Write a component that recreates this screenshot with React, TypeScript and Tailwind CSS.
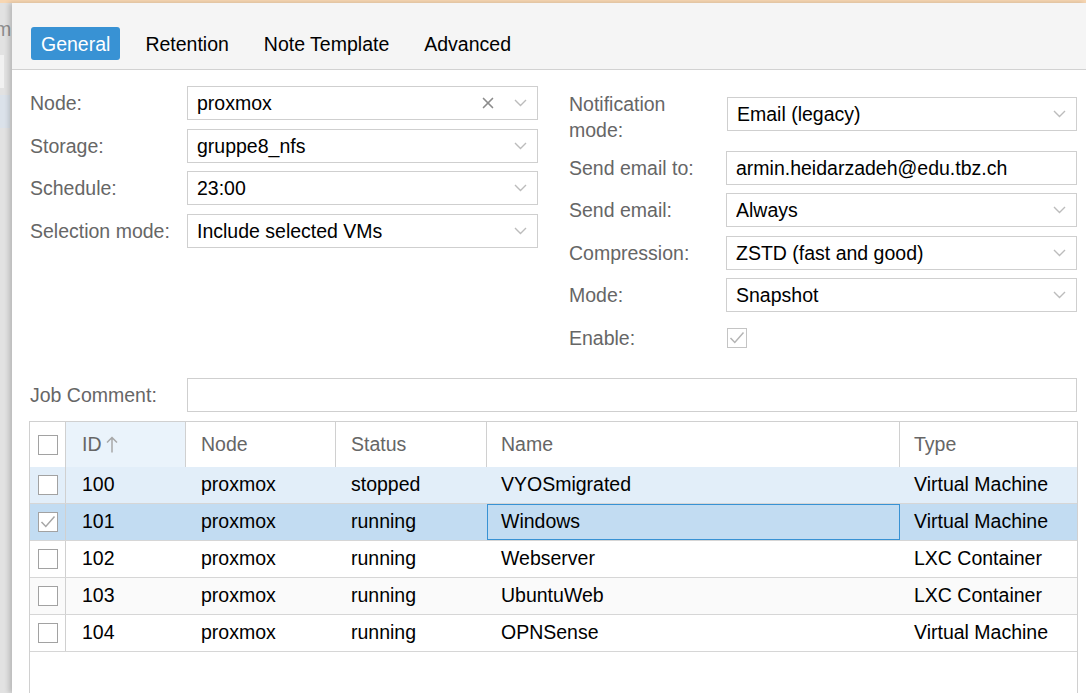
import { X } from 'lucide-react'

function Chevron() {
  return (
    <svg width="13" height="8" viewBox="0 0 13 8" className="shrink-0">
      <path d="M1 1l5.5 5.5L12 1" fill="none" stroke="#bcbcbc" strokeWidth="1.4" />
    </svg>
  )
}

function Field({ value = '', combo = true, clear = false }: { value?: string; combo?: boolean; clear?: boolean }) {
  return (
    <div className="h-[34px] flex items-center border border-[#cfcfcf] bg-white pl-[9px] pr-[10px]">
      <span className="flex-1 truncate text-black pt-[2px]">{value}</span>
      {clear && <X className="w-[18px] h-[18px] text-[#8c8c8c] mr-[17px]" strokeWidth={2.2} />}
      {combo && <Chevron />}
    </div>
  )
}

function Row({ label, children }: { label: string; children: React.ReactNode }) {
  return (
    <div className="flex items-center">
      <div className="w-[157px] shrink-0 text-[#666] pt-[2px]">{label}</div>
      <div className="flex-1">{children}</div>
    </div>
  )
}

function Check({ checked = false, light = false }: { checked?: boolean; light?: boolean }) {
  return (
    <div
      className={`w-[20px] h-[20px] border-[1.5px] bg-white flex items-center justify-center ${
        light ? 'border-[#c4c4c4]' : 'border-[#a2a2a2]'
      }`}
    >
      {checked && (
        <svg width="16" height="14" viewBox="0 0 16 14">
          <path d="M1.5 7l4.3 4.5L14.5 1.5" fill="none" stroke={light ? '#b4b4b4' : '#a6a6a6'} strokeWidth="1.5" />
        </svg>
      )}
    </div>
  )
}

function SortArrow() {
  return (
    <svg width="12" height="17" viewBox="0 0 12 17" className="ml-[4px]">
      <path d="M6 1.5V16.5M1 6.5L6 1.5L11 6.5" fill="none" stroke="#a8a8a8" strokeWidth="1.5" />
    </svg>
  )
}

const guests = [
  { id: 100, status: 'stopped', name: 'VYOSmigrated', type: 'Virtual Machine', bg: 'bg-[#e2eef9]' },
  { id: 101, status: 'running', name: 'Windows', type: 'Virtual Machine', bg: 'bg-[#c2dcf2]', selected: true },
  { id: 102, status: 'running', name: 'Webserver', type: 'LXC Container', bg: 'bg-white' },
  { id: 103, status: 'running', name: 'UbuntuWeb', type: 'LXC Container', bg: 'bg-[#fafafa]' },
  { id: 104, status: 'running', name: 'OPNSense', type: 'Virtual Machine', bg: 'bg-white' },
]

export default function App() {
  return (
    <div className="w-[1086px] h-[693px] overflow-hidden flex flex-col bg-[#e4e4e4] text-[19.5px] font-['Liberation_Sans',Arial,sans-serif]">
      <div className="h-[3px] shrink-0 bg-[#f7d6b2]" />
      <div className="flex flex-1 min-h-0">
        {/* page behind the dialog */}
        <div className="w-[12px] shrink-0 bg-[#e2e2e2] overflow-hidden flex flex-col">
          <div className="h-[52px] pt-[14px] text-[#8e8e8e] leading-[24px] -ml-[5px]">m</div>
          <div className="h-[33px] w-[4px] bg-[#f1f1f1]" />
          <div className="h-[7px]" />
          <div className="h-[33px] w-[10px] bg-[#dbe2ea]" />
        </div>

        <div className="flex-1 flex flex-col bg-white shadow-[-3px_0_5px_rgba(0,0,0,0.18)]">
          <div className="shrink-0 bg-[#f5f5f5] border-b border-[#d2d2d2] pt-[24px] pb-[9px] pl-[19px] flex items-center">
            <div className="h-[33px] px-[10px] pt-[2px] flex items-center rounded-[3px] bg-[#3892d4] text-white">General</div>
            <div className="h-[33px] px-[10px] pt-[2px] ml-[15px] flex items-center text-black">Retention</div>
            <div className="h-[33px] px-[10px] pt-[2px] ml-[15px] flex items-center text-black">Note Template</div>
            <div className="h-[33px] px-[10px] pt-[2px] ml-[15px] flex items-center text-black">Advanced</div>
          </div>

          <div className="flex-1 flex flex-col pt-[16px] pl-[18px] pr-[9px] min-h-0">
            <div className="grid grid-cols-2 gap-x-[31px]">
              <div className="flex flex-col gap-[8.5px]">
                <Row label="Node:"><Field value="proxmox" clear /></Row>
                <Row label="Storage:"><Field value="gruppe8_nfs" /></Row>
                <Row label="Schedule:"><Field value="23:00" /></Row>
                <Row label="Selection mode:"><Field value="Include selected VMs" /></Row>
              </div>
              <div className="flex flex-col gap-[8.5px]">
                <div className="flex items-center h-[56px]">
                  <div className="w-[158px] shrink-0 text-[#666] leading-[26px] pt-[5px]">
                    Notification
                    <br />
                    mode:
                  </div>
                  <div className="flex-1">
                    <Field value="Email (legacy)" />
                  </div>
                </div>
                <Row label="Send email to:"><Field value="armin.heidarzadeh@edu.tbz.ch" combo={false} /></Row>
                <Row label="Send email:"><Field value="Always" /></Row>
                <Row label="Compression:"><Field value="ZSTD (fast and good)" /></Row>
                <Row label="Mode:"><Field value="Snapshot" /></Row>
                <div className="flex items-center h-[34px]">
                  <div className="w-[158px] shrink-0 text-[#666] pt-[2px]">Enable:</div>
                  <Check checked light />
                </div>
              </div>
            </div>

            <div className="mt-[23.5px]">
              <Row label="Job Comment:"><Field combo={false} /></Row>
            </div>

            <div className="mt-[9px] -ml-px -mr-px flex-1 border-t border-x border-[#d0d0d0] bg-white flex flex-col">
              <div className="h-[45px] shrink-0 flex text-[#666]">
                <div className="w-[36px] shrink-0 border-r border-[#d0d0d0] flex items-center justify-center">
                  <Check />
                </div>
                <div className="w-[120px] shrink-0 border-r border-[#d0d0d0] bg-[#eaf3fb] flex items-center pl-[16px]">
                  ID
                  <SortArrow />
                </div>
                <div className="w-[150px] shrink-0 border-r border-[#d0d0d0] flex items-center pl-[15px]">Node</div>
                <div className="w-[151px] shrink-0 border-r border-[#d0d0d0] flex items-center pl-[15px]">Status</div>
                <div className="w-[413px] shrink-0 border-r border-[#d0d0d0] flex items-center pl-[14px]">Name</div>
                <div className="flex-1 flex items-center pl-[14px]">Type</div>
              </div>

              {guests.map((g) => (
                <div key={g.id} className={`h-[37px] shrink-0 flex border-b border-[#d6d6d6] text-black ${g.bg}`}>
                  <div className="w-[36px] shrink-0 border-r border-[#d0d0d0] flex items-center justify-center">
                    <Check checked={g.selected} />
                  </div>
                  <div className="w-[120px] shrink-0 flex items-center pl-[16px]">{g.id}</div>
                  <div className="w-[150px] shrink-0 flex items-center pl-[15px]">proxmox</div>
                  <div className="w-[151px] shrink-0 flex items-center pl-[15px]">{g.status}</div>
                  <div
                    className={`w-[413px] shrink-0 flex items-center pl-[14px] ${
                      g.selected ? 'shadow-[inset_0_0_0_1px_#3892d4]' : ''
                    }`}
                  >
                    {g.name}
                  </div>
                  <div className="flex-1 flex items-center pl-[14px]">{g.type}</div>
                </div>
              ))}
            </div>
          </div>
        </div>
      </div>
    </div>
  )
}
